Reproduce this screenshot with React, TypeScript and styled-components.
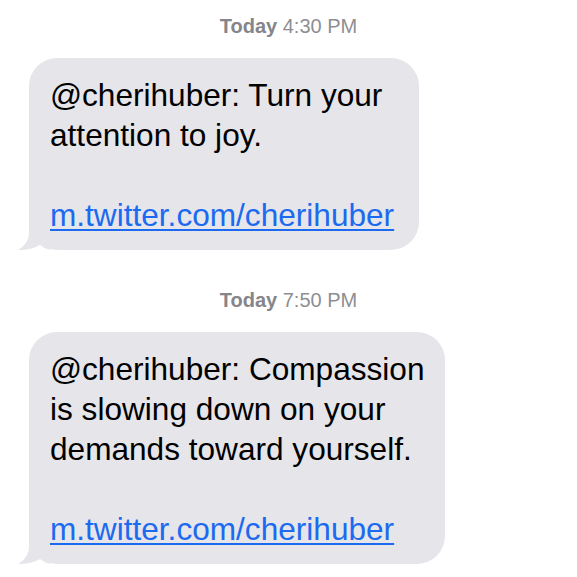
import styled, { createGlobalStyle } from "styled-components";

const GlobalStyle = createGlobalStyle`
  html, body {
    margin: 0;
    padding: 0;
    background: #ffffff;
  }
  body {
    font-family: "Liberation Sans", Arial, sans-serif;
    -webkit-font-smoothing: antialiased;
  }
`;

type Message = {
  day: string;
  time: string;
  lines: string[];
  link: string;
  width: number;
};

const messages: Message[] = [
  {
    day: "Today",
    time: "4:30 PM",
    lines: ["@cherihuber: Turn your", "attention to joy."],
    link: "m.twitter.com/cherihuber",
    width: 390,
  },
  {
    day: "Today",
    time: "7:50 PM",
    lines: [
      "@cherihuber: Compassion",
      "is slowing down on your",
      "demands toward yourself.",
    ],
    link: "m.twitter.com/cherihuber",
    width: 416,
  },
];

function Tail() {
  return (
    <TailSvg width="32" height="30" viewBox="0 0 32 30">
      <path d="M11 0 L11 12 C11 20 7 26 0 30 C8 30 15 29 22 25 C25 27 28 29 32 30 L32 0 Z" />
    </TailSvg>
  );
}

function App(): JSX.Element {
  return (
    <>
      <GlobalStyle />
      <Thread>
        {messages.map((m, i) => (
          <Group key={i} first={i === 0}>
            <Stamp>
              <b>{m.day}</b> {m.time}
            </Stamp>
            <Bubble width={m.width}>
              {m.lines.map((l, j) => (
                <Line key={j}>{l}</Line>
              ))}
              <Spacer />
              <Link href="#">{m.link}</Link>
              <Tail />
            </Bubble>
          </Group>
        ))}
      </Thread>
    </>
  );
}

export default App;

const Thread = styled.div`
  width: 577px;
  height: 577px;
  display: flex;
  flex-direction: column;
  overflow: hidden;
`;

const Group = styled.div<{ first: boolean }>`
  display: flex;
  flex-direction: column;
  padding-left: 29px;
  margin-top: ${(p) => (p.first ? "14px" : "38px")};
`;

const Stamp = styled.div`
  align-self: center;
  margin-left: -29px;
  font-size: 20px;
  line-height: 24px;
  color: #8e8e93;
  margin-bottom: 20px;

  b {
    font-weight: 700;
    color: #85858a;
  }
`;

const Bubble = styled.div<{ width: number }>`
  position: relative;
  box-sizing: border-box;
  width: ${(p) => p.width}px;
  background: #e5e5ea;
  border-radius: 28px;
  padding: 17px 0 15px 21px;
  font-size: 31.6px;
  line-height: 40px;
  color: #000000;
`;

const Line = styled.div`
  white-space: nowrap;
`;

const Spacer = styled.div`
  height: 40px;
`;

const Link = styled.a`
  color: #1b6af0;
  text-decoration: underline;
  text-decoration-thickness: 2px;
  text-underline-offset: 3px;
  white-space: nowrap;
`;

const TailSvg = styled.svg`
  position: absolute;
  left: -11px;
  bottom: 0;
  fill: #e5e5ea;
`;
